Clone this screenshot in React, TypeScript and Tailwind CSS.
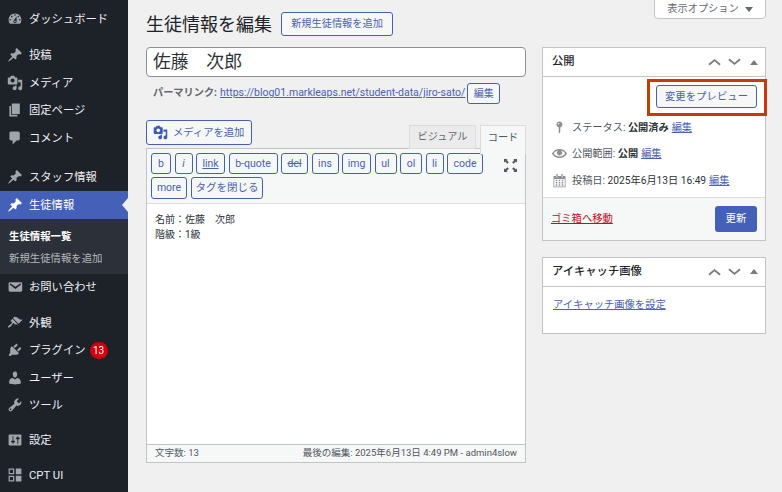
import React from "react";

const P = {
  dashboard:
    "M3.76 16h12.48c1.1-1.37 1.76-3.11 1.76-5 0-4.42-3.58-8-8-8s-8 3.58-8 8c0 1.89.66 3.63 1.76 5zM10 4c.55 0 1 .45 1 1s-.45 1-1 1-1-.45-1-1 .45-1 1-1zM6 6c.55 0 1 .45 1 1s-.45 1-1 1-1-.45-1-1 .45-1 1-1zm8 0c.55 0 1 .45 1 1s-.45 1-1 1-1-.45-1-1 .45-1 1-1zm-5.37 5.55L12 7v6c0 1.1-.9 2-2 2s-2-.9-2-2c0-.57.24-1.08.63-1.45zM4 10c.55 0 1 .45 1 1s-.45 1-1 1-1-.45-1-1 .45-1 1-1zm12 0c.55 0 1 .45 1 1s-.45 1-1 1-1-.45-1-1 .45-1 1-1zm-5 3c0-.55-.45-1-1-1s-1 .45-1 1 .45 1 1 1 1-.45 1-1z",
  pin: "M10.44 3.02l1.82-1.82 6.36 6.35-1.83 1.82c-1.05-.68-2.48-.57-3.41.36l-.75.75c-.92.93-1.04 2.35-.35 3.41l-1.83 1.82-2.41-2.41-2.8 2.79c-.42.42-3.38 2.71-3.8 2.29s1.86-3.39 2.28-3.81l2.79-2.79L4.1 9.36l1.83-1.82c1.05.69 2.48.57 3.4-.36l.75-.75c.93-.92 1.05-2.35.36-3.41z",
  media:
    "M13 11V4c0-.55-.45-1-1-1h-1.67L9 1H5L3.67 3H2c-.55 0-1 .45-1 1v7c0 .55.45 1 1 1h10c.55 0 1-.45 1-1zM7 4.5c1.38 0 2.5 1.12 2.5 2.5S8.38 9.5 7 9.5 4.5 8.38 4.5 7 5.62 4.5 7 4.5zM14 6h5v10.5c0 1.38-1.12 2.5-2.5 2.5S14 17.88 14 16.5s1.12-2.5 2.5-2.5c.17 0 .34.02.5.05V9h-3V6zm-4 8.05V13h2v3.5c0 1.38-1.12 2.5-2.5 2.5S7 17.88 7 16.5 8.12 14 9.5 14c.17 0 .34.02.5.05z",
  page: "M6 15V2h10v13H6zm-1 1h8v2H3V5h2v11z",
  comment:
    "M5 2h9c1.1 0 2 .9 2 2v7c0 1.1-.9 2-2 2h-2l-5 5v-5H5c-1.1 0-2-.9-2-2V4c0-1.1.9-2 2-2z",
  email:
    "M3.87 4h13.25C18.37 4 19 4.59 19 5.79v8.42c0 1.19-.63 1.79-1.88 1.79H3.87c-1.25 0-1.88-.6-1.88-1.79V5.79c0-1.2.63-1.79 1.88-1.79zm6.62 8.6l6.74-5.53c.24-.2.43-.66.13-1.07-.29-.41-.82-.42-1.17-.17l-5.7 3.86L4.8 5.83c-.35-.25-.88-.24-1.17.17-.3.41-.11.87.13 1.07z",
  brush:
    "M14.48 11.06L7.41 3.99l1.5-1.5c.5-.56 2.3-.47 3.51.32 1.21.8 1.43 1.28 2.91 2.1 1.18.64 2.45 1.26 4.45.85zm-.71.71L6.7 4.7 4.93 6.47c-.39.39-.39 1.02 0 1.41l1.06 1.06c.39.39.39 1.03 0 1.42-.6.6-1.43 1.11-2.21 1.69-.35.26-.7.53-1.01.84C1.43 13.71.96 15.12 1.4 15.56c.44.44 1.85-.03 3.7-1.88.31-.31.58-.66.84-1.01.58-.78 1.09-1.61 1.69-2.21.39-.39 1.03-.39 1.42 0L9.11 11.5c.39.39 1.02.39 1.41 0z",
  plugin:
    "M13.11 4.36L9.87 7.6 8 5.73l3.24-3.24c.35-.34 1.05-.2 1.56.32.52.51.66 1.21.31 1.55zm-8 1.77l.91-1.12 9.01 9.01-1.19.84c-.71.71-2.63 1.16-3.82 1.16H6.14L4.9 17.26c-.59.59-1.54.59-2.12 0-.59-.58-.59-1.53 0-2.12l1.24-1.24v-3.88c0-1.13.4-3.19 1.09-3.89zm7.26 3.97l3.24-3.24c.34-.35 1.04-.21 1.55.31.52.51.66 1.21.31 1.55l-3.24 3.25z",
  user: "M10 9.25c-2.27 0-2.73-3.44-2.73-3.44C7 4.02 7.82 2 9.97 2c2.16 0 2.98 2.02 2.71 3.81 0 0-.41 3.44-2.68 3.44zm0 2.57L12.72 10c2.39 0 4.52 2.33 4.52 4.53v2.49s-3.65 1.13-7.24 1.13c-3.65 0-7.24-1.13-7.24-1.13v-2.49c0-2.25 1.94-4.48 4.47-4.48z",
  tools:
    "M16.68 9.77c-1.34 1.34-3.3 1.67-4.95.99l-5.41 6.52c-.99.99-2.59.99-3.58 0s-.99-2.59 0-3.57l6.52-5.42c-.68-1.65-.35-3.61.99-4.95 1.28-1.28 3.12-1.62 4.72-1.06l-2.89 2.89 2.82 2.82 2.86-2.87c.53 1.58.18 3.39-1.08 4.65zM3.81 16.21c.4.39 1.04.39 1.43 0 .4-.4.4-1.04 0-1.43-.39-.4-1.03-.4-1.43 0-.39.39-.39 1.03 0 1.43z",
  settings:
    "M18 16V4c0-.55-.45-1-1-1H3c-.55 0-1 .45-1 1v12c0 .55.45 1 1 1h14c.55 0 1-.45 1-1zM8 11h1c.55 0 1 .45 1 1s-.45 1-1 1H8v1.5c0 .28-.22.5-.5.5s-.5-.22-.5-.5V13H6c-.55 0-1-.45-1-1s.45-1 1-1h1V5.5c0-.28.22-.5.5-.5s.5.22.5.5V11zm5-2h-1c-.55 0-1-.45-1-1s.45-1 1-1h1V5.5c0-.28.22-.5.5-.5s.5.22.5.5V7h1c.55 0 1 .45 1 1s-.45 1-1 1h-1v5.5c0 .28-.22.5-.5.5s-.5-.22-.5-.5V9z",
  cpt: "M2 2h7v7H2zM3.5 3.5v4h4v-4zM11 2h7v7h-7zM2 11h7v7H2zM3.5 12.5v4h4v-4zM11 11h7v7h-7z",
  status:
    "M14 6c0 1.86-1.28 3.41-3 3.86V16c0 1-2 2-2 2V9.86C7.28 9.41 6 7.86 6 6c0-2.21 1.79-4 4-4s4 1.79 4 4zM8 5c0 .55.45 1 1 1s1-.45 1-1-.45-1-1-1-1 .45-1 1z",
  eye: "M19.7 9.4C17.7 6 14 3.9 10 3.9S2.3 6 .3 9.4L0 10l.3.6c2 3.4 5.7 5.5 9.7 5.5s7.7-2.1 9.7-5.5l.3-.6-.3-.6zM10 14.1c-3.1 0-6-1.6-7.7-4.1C3.6 8 5.7 6.6 8 6.1c-.9.6-1.5 1.7-1.5 2.9 0 1.9 1.6 3.5 3.5 3.5s3.5-1.6 3.5-3.5c0-1.2-.6-2.3-1.5-2.9 2.3.5 4.4 1.9 5.7 3.9-1.7 2.5-4.6 4.1-7.7 4.1z",
  calendar:
    "M15 4h3v15H2V4h3V3c0-.41.15-.76.44-1.06.29-.29.65-.44 1.06-.44s.77.15 1.06.44c.29.3.44.65.44 1.06v1h4V3c0-.41.15-.76.44-1.06.29-.29.65-.44 1.06-.44s.77.15 1.06.44c.29.3.44.65.44 1.06v1zM6 3v2.5c0 .14.05.26.15.36.09.09.21.14.35.14s.26-.05.36-.14c.09-.1.14-.22.14-.36V3c0-.14-.05-.26-.14-.35-.1-.1-.22-.15-.36-.15s-.26.05-.35.15c-.1.09-.15.21-.15.35zm7 0v2.5c0 .14.05.26.14.36.1.09.22.14.36.14s.26-.05.36-.14c.09-.1.14-.22.14-.36V3c0-.14-.05-.26-.14-.35-.1-.1-.22-.15-.36-.15s-.26.05-.36.15c-.09.09-.14.21-.14.35zm4 15V8H3v10h14zM7 9v2H5V9h2zm2 0h2v2H9V9zm4 2V9h2v2h-2zm-6 1v2H5v-2h2zm2 0h2v2H9v-2zm4 2v-2h2v2h-2zm-6 1v2H5v-2h2zm4 2H9v-2h2v2zm4 0h-2v-2h2v2z",
};

function Icon({ d, className }: { d: string; className: string }) {
  return (
    <svg viewBox="0 0 20 20" fill="currentColor" fillRule="evenodd" className={className}>
      <path d={d} />
    </svg>
  );
}

function MenuItem({
  icon,
  label,
  mt,
  active,
  badge,
}: {
  icon: string;
  label: string;
  mt: string;
  active?: boolean;
  badge?: string;
}) {
  return (
    <div
      className={`relative flex h-[27.5px] items-center pl-[7px] text-[11.3px] ${mt} ${
        active ? "bg-[#4460b8] text-white" : "text-[#eef0f3]"
      }`}
    >
      <Icon d={icon} className={`h-[16px] w-[16px] ${active ? "text-white" : "text-[#a0a5ab]"}`} />
      <span className="ml-[6px] pt-[3px]">{label}</span>
      {badge && (
        <span className="ml-[4px] flex h-[17px] w-[18px] items-center justify-center rounded-full bg-[#d2000f] text-[10px] text-white">
          {badge}
        </span>
      )}
      {active && (
        <span className="absolute right-0 top-[7px] h-0 w-0 border-y-[7px] border-r-[6px] border-y-transparent border-r-[#f0f0f1]" />
      )}
    </div>
  );
}

function Sidebar() {
  return (
    <div className="h-[492px] w-32 shrink-0 overflow-hidden bg-[#1d2128] pt-[5px]">
      <MenuItem icon={P.dashboard} label="ダッシュボード" mt="" />
      <MenuItem icon={P.pin} label="投稿" mt="mt-[9px]" />
      <MenuItem icon={P.media} label="メディア" mt="" />
      <MenuItem icon={P.page} label="固定ページ" mt="" />
      <MenuItem icon={P.comment} label="コメント" mt="" />
      <MenuItem icon={P.pin} label="スタッフ情報" mt="mt-[12px]" />
      <MenuItem icon={P.pin} label="生徒情報" mt="" active />
      <div className="flex h-[55px] flex-col justify-center gap-[6px] bg-[#2c3038] pl-[9px] pt-[3px] text-[10.4px] leading-[16px]">
        <div className="font-bold text-white">生徒情報一覧</div>
        <div className="text-[#b4b8bd]">新規生徒情報を追加</div>
      </div>
      <MenuItem icon={P.email} label="お問い合わせ" mt="" />
      <MenuItem icon={P.brush} label="外観" mt="mt-[8px]" />
      <MenuItem icon={P.plugin} label="プラグイン" mt="" badge="13" />
      <MenuItem icon={P.user} label="ユーザー" mt="" />
      <MenuItem icon={P.tools} label="ツール" mt="" />
      <MenuItem icon={P.settings} label="設定" mt="mt-[7px]" />
      <MenuItem icon={P.cpt} label="CPT UI" mt="mt-[8px]" />
    </div>
  );
}

const toolbarRow1 = [
  { label: "b", w: "w-[20px]" },
  { label: "i", w: "w-[18px] italic" },
  { label: "link", w: "w-[29px] underline" },
  { label: "b-quote", w: "w-[49px]" },
  { label: "del", w: "w-[27px] line-through" },
  { label: "ins", w: "w-[27px]" },
  { label: "img", w: "w-[29px]" },
  { label: "ul", w: "w-[22px]" },
  { label: "ol", w: "w-[22px]" },
  { label: "li", w: "w-[18px]" },
  { label: "code", w: "w-[36px]" },
];

function ToolButton({ label, w, h }: { label: string; w: string; h: string }) {
  return (
    <div
      className={`flex items-center justify-center rounded-[3px] border border-[#4460b8] bg-[#f6f7f7] text-[10.5px] text-[#4a62b5] ${w} ${h}`}
    >
      {label}
    </div>
  );
}

function Editor() {
  return (
    <div className="w-[380px]">
      <div className="flex h-[33px] items-center pt-[16px]">
        <h1 className="text-[18px] font-normal leading-none text-[#1d2327]">生徒情報を編集</h1>
      </div>
      <div className="mt-[14px] flex h-[30px] items-center rounded-[4px] border border-[#8c8f94] bg-white pl-[6px] text-[17.8px] text-[#2c3338]">
        佐藤　次郎
      </div>
      <div className="mt-[5px] flex h-[22px] items-center pl-[7px] text-[10.2px] text-[#646970]">
        <span className="font-bold">パーマリンク:</span>
        <span className="ml-[3px] text-[10.5px] text-[#4a62b5] underline">
          https://blog01.markleaps.net/student-data/jiro-sato/
        </span>
        <span className="ml-[2px] flex h-[21px] w-[33px] items-center justify-center rounded-[3px] border border-[#4460b8] bg-[#f6f7f7] text-[10px] text-[#4a62b5]">
          編集
        </span>
      </div>
      <div className="mt-[16px] flex h-[33px] items-start justify-between">
        <div className="flex h-[25px] w-[106px] items-center rounded-[3px] border border-[#4460b8] bg-[#f6f7f7] pl-[6px] text-[10.3px] text-[#4a62b5]">
          <Icon d={P.media} className="h-[15px] w-[15px] text-[#3f5aae]" />
          <span className="ml-[5px]">メディアを追加</span>
        </div>
        <div className="mt-[5px] flex items-start text-[10.2px]">
          <div className="flex h-[24px] w-[67px] items-center justify-center border border-[#dcdcde] bg-[#ebebeb] text-[#646970]">
            ビジュアル
          </div>
          <div className="relative z-10 ml-[4px] flex h-[29px] w-[46px] items-center justify-center border border-[#dcdcde] border-b-[#f6f7f7] bg-[#f6f7f7] pb-[4px] text-[#50575e]">
            コード
          </div>
        </div>
      </div>
      <div className="-mt-[5px] border border-[#c3c4c7] bg-white">
        <div className="relative h-[55px] border-b border-[#dcdcde] bg-[#f6f7f7] pl-[4px] pt-[4px]">
          <div className="flex gap-[3.5px]">
            {toolbarRow1.map((b) => (
              <ToolButton key={b.label} label={b.label} w={b.w} h="h-[21px]" />
            ))}
          </div>
          <div className="mt-[3px] flex gap-[4px]">
            <ToolButton label="more" w="w-[36px]" h="h-[22px]" />
            <ToolButton label="タグを閉じる" w="w-[72px]" h="h-[22px]" />
          </div>
          <svg viewBox="0 0 14 14" className="absolute right-[8px] top-[10px] h-[13px] w-[13px] text-[#50575e]" fill="currentColor">
            <path d="M0 0h4L2.8 1.2 5.2 3.6 3.6 5.2 1.2 2.8 0 4zM14 0v4l-1.2-1.2-2.4 2.4-1.6-1.6 2.4-2.4L10 0zM0 14v-4l1.2 1.2 2.4-2.4 1.6 1.6-2.4 2.4L4 14zM14 14h-4l1.2-1.2-2.4-2.4 1.6-1.6 2.4 2.4L14 10z" />
          </svg>
        </div>
        <div className="h-[240px] px-[8px] py-[8px] text-[10px] leading-[15px] text-[#2c3338]">
          <div>名前：佐藤　次郎</div>
          <div>階級：1級</div>
        </div>
        <div className="flex h-[18px] items-center justify-between border-t border-[#c3c4c7] bg-[#f6f7f7] px-[8px] text-[9.5px] text-[#50575e]">
          <span>文字数: 13</span>
          <span>最後の編集: 2025年6月13日 4:49 PM - admin4slow</span>
        </div>
      </div>
    </div>
  );
}

function Chevrons() {
  return (
    <div className="flex items-center gap-[7px] text-[#787c82]">
      <svg viewBox="0 0 14 8" className="h-[8px] w-[13px]" fill="none" stroke="currentColor" strokeWidth="2">
        <path d="M1 7l6-5 6 5" />
      </svg>
      <svg viewBox="0 0 14 8" className="h-[8px] w-[13px]" fill="none" stroke="currentColor" strokeWidth="2">
        <path d="M1 1l6 5 6-5" />
      </svg>
      <span className="ml-[2px] h-0 w-0 border-x-[4px] border-b-[5px] border-x-transparent border-b-[#787c82]" />
    </div>
  );
}

function BoxHeader({ title }: { title: string }) {
  return (
    <div className="flex h-[29px] items-center justify-between border-b border-[#c3c4c7] pl-[9px] pr-[7px] text-[11.3px] font-medium text-[#1d2327]">
      <span className="pt-[1px]">{title}</span>
      <Chevrons />
    </div>
  );
}

function MetaRow({ icon, children }: { icon: string; children: React.ReactNode }) {
  return (
    <div className="flex h-[26.5px] items-center pl-[9px] text-[10.2px] text-[#50575e]">
      <Icon d={icon} className="h-[15px] w-[15px] text-[#8c8f94]" />
      <span className="ml-[5px]">{children}</span>
    </div>
  );
}

function EditLink() {
  return <span className="ml-[3px] text-[#4a62b5] underline">編集</span>;
}

function SideColumn() {
  return (
    <div className="w-[224px] shrink-0">
      <div className="flex h-[47px] items-start justify-end">
        <div className="-mt-[1px] flex h-[20px] w-[112px] items-center justify-center gap-[6px] rounded-b-[4px] border border-[#c3c4c7] bg-white text-[10.2px] text-[#646970]">
          表示オプション
          <span className="h-0 w-0 border-x-[4px] border-t-[5px] border-x-transparent border-t-[#646970]" />
        </div>
      </div>
      <div className="border border-[#c3c4c7] bg-white">
        <BoxHeader title="公開" />
        <div className="relative flex h-[37px] items-start justify-end pr-[8px] pt-[8px]">
          <div className="flex h-[23px] w-[101px] items-center justify-center rounded-[3px] border border-[#4460b8] bg-[#f6f7f7] text-[10.4px] text-[#4a62b5]">
            変更をプレビュー
          </div>
          <div className="absolute left-[104px] top-[2px] h-[37px] w-[120px] border-[3px] border-[#c9390c]" />
        </div>
        <div>
          <MetaRow icon={P.status}>
            ステータス: <b className="font-bold text-[#2c3338]">公開済み</b>
            <EditLink />
          </MetaRow>
          <MetaRow icon={P.eye}>
            公開範囲: <b className="font-bold text-[#2c3338]">公開</b>
            <EditLink />
          </MetaRow>
          <MetaRow icon={P.calendar}>
            投稿日: <span className="text-[#2c3338]">2025年6月13日 16:49</span>
            <EditLink />
          </MetaRow>
        </div>
        <div className="mt-[3px] flex h-[43px] items-center justify-between border-t border-[#dcdcde] bg-[#f6f7f7] pl-[8px] pr-[8px]">
          <span className="text-[10.3px] text-[#c40b1e] underline">ゴミ箱へ移動</span>
          <div className="flex h-[26px] w-[42px] items-center justify-center rounded-[3px] bg-[#4460b8] text-[10.4px] text-white">
            更新
          </div>
        </div>
      </div>
      <div className="mt-[16px] border border-[#c3c4c7] bg-white">
        <BoxHeader title="アイキャッチ画像" />
        <div className="h-[46px] pl-[10px] pt-[10px] text-[10.3px] text-[#4a62b5] underline">
          アイキャッチ画像を設定
        </div>
      </div>
    </div>
  );
}

export default function App() {
  return (
    <div className="flex h-[492px] w-[782px] overflow-hidden whitespace-nowrap bg-[#f0f0f1] [font-family:'Roboto','Noto_Sans_CJK_JP',sans-serif]">
      <Sidebar />
      <div className="ml-[18px] flex items-start">
        <div className="relative">
          <Editor />
          <div className="absolute left-[135px] top-[12px] flex h-[24px] w-[112px] items-center justify-center rounded-[3px] border border-[#4460b8] bg-[#f6f7f7] text-[10.2px] text-[#4a62b5]">
            新規生徒情報を追加
          </div>
        </div>
        <div className="ml-[16px]">
          <SideColumn />
        </div>
      </div>
    </div>
  );
}
